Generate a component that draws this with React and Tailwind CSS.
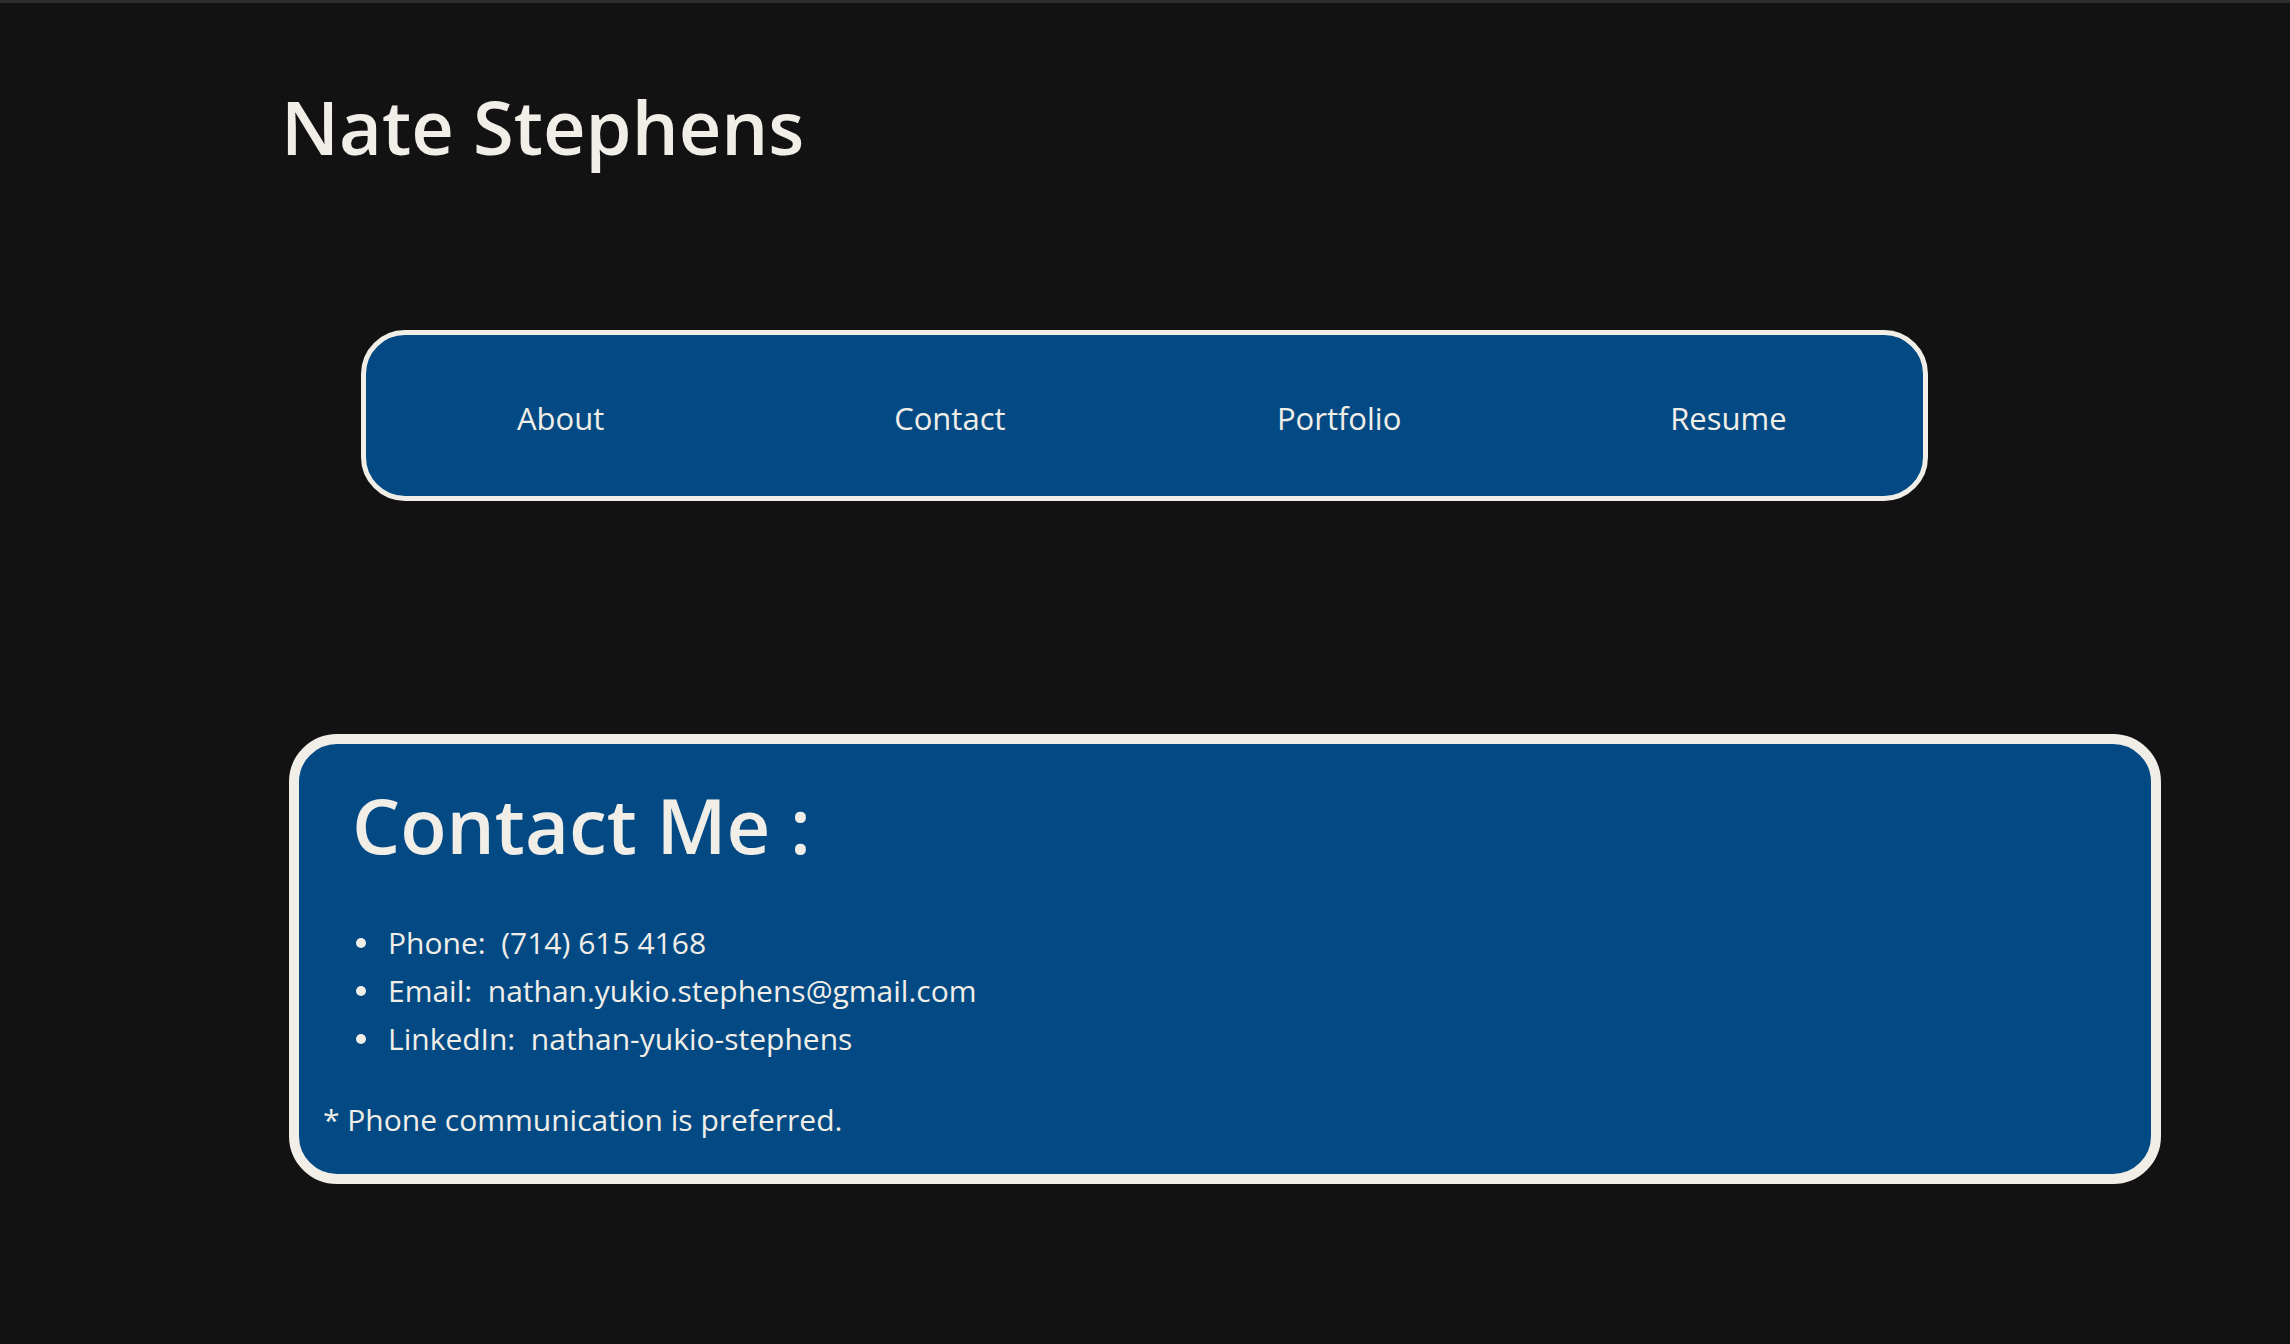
const NAV = ['About', 'Contact', 'Portfolio', 'Resume']

const CONTACTS = [
  { label: 'Phone:', value: '(714) 615 4168' },
  { label: 'Email:', value: 'nathan.yukio.stephens@gmail.com' },
  { label: 'LinkedIn:', value: 'nathan-yukio-stephens' },
]

export default function App() {
  return (
    <div className="min-h-screen bg-[#121212] border-t-[3px] border-[#2c2c2c] text-[#f1eee8] font-['Open_Sans','Noto_Sans',sans-serif]">
      {/* Header */}
      <h1 className="pt-[87px] pl-[281px] text-[74px] leading-none font-semibold">Nate Stephens</h1>

      {/* Nav */}
      <nav className="mt-[166px] ml-[361px] w-[1567px] h-[171px] pt-[6px] rounded-[44px] border-[5px] border-[#f1eee8] bg-[#034a84] grid grid-cols-4 items-center">
        {NAV.map(item => (
          <a key={item} href="#" className="text-center text-[31px] leading-none">{item}</a>
        ))}
      </nav>

      {/* Contact card */}
      <section className="mt-[233px] ml-[289px] w-[1872px] rounded-[48px] border-[10px] border-[#f1eee8] bg-[#034a84] pt-[43px] pb-[30px]">
        <h2 className="ml-[53px] text-[76px] leading-none font-semibold">Contact Me :</h2>
        <ul className="mt-[56px] ml-[57px]">
          {CONTACTS.map(c => (
            <li key={c.label} className="flex items-center text-[30px] leading-[48px]">
              <span className="w-[10px] h-[10px] rounded-full bg-[#f1eee8] mr-[22px] flex-shrink-0" />
              <span>{c.label}&nbsp;&nbsp;{c.value}</span>
            </li>
          ))}
        </ul>
        <p className="mt-[33px] pl-[24px] text-[30px] leading-[48px]">* Phone communication is preferred.</p>
      </section>
    </div>
  )
}
